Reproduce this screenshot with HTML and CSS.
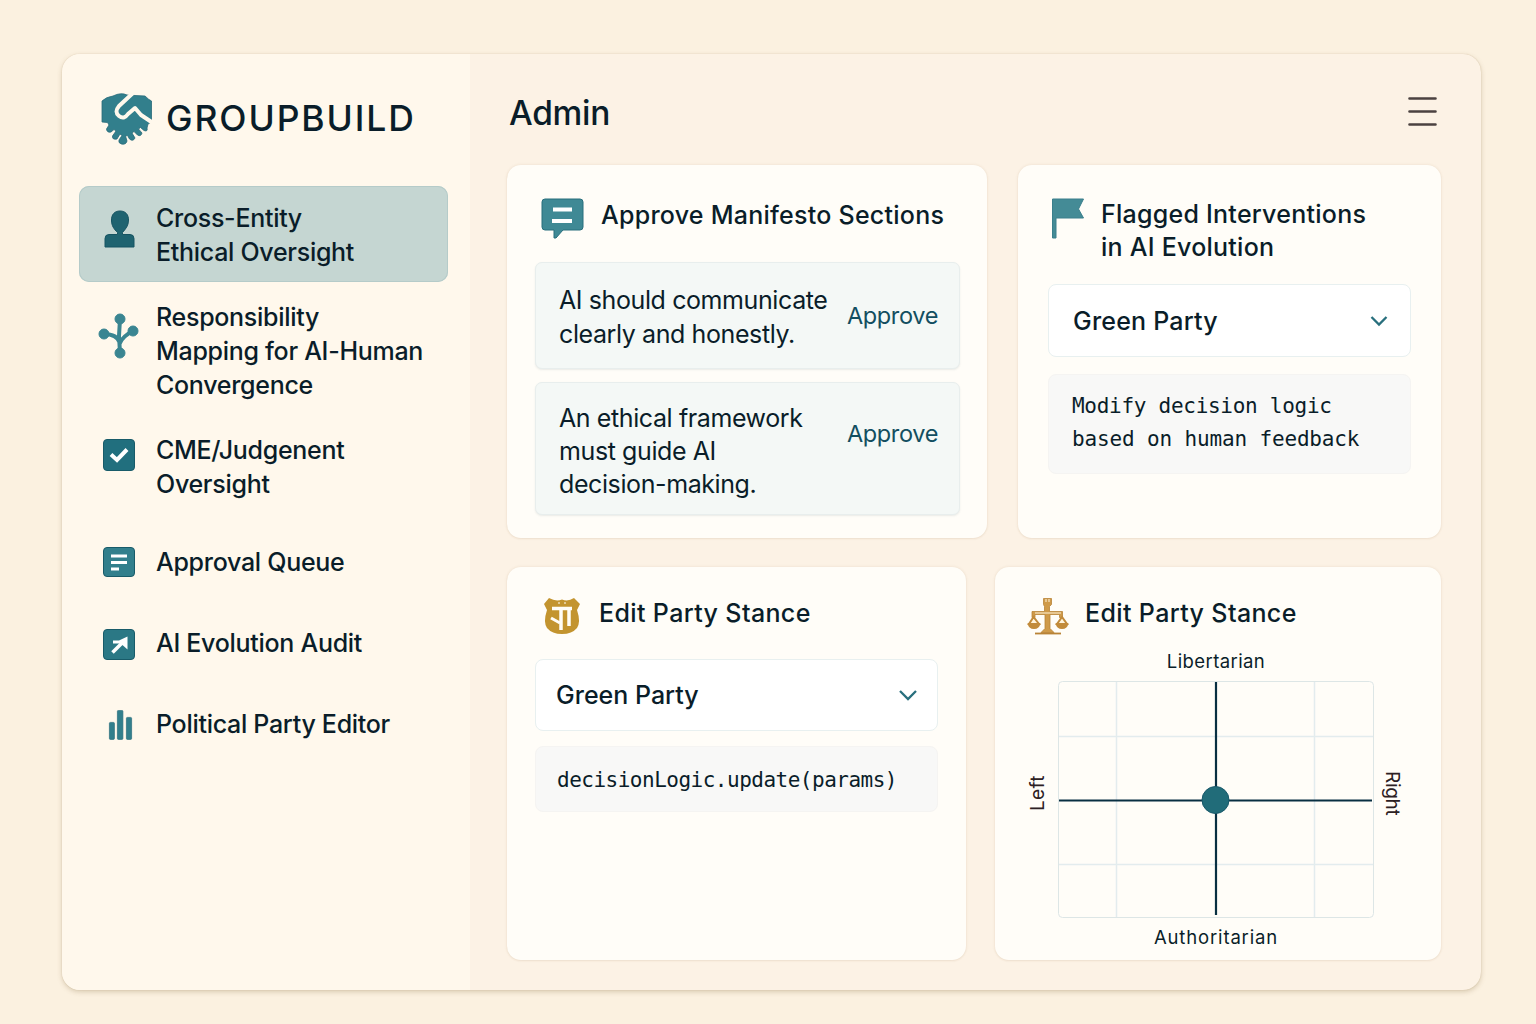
FILE: index.html
```html
<!DOCTYPE html>
<html lang="en">
<head>
<meta charset="utf-8">
<title>GroupBuild Admin</title>
<link rel="stylesheet" href="styles.css">
</head>
<body>
<div class="window">
  <aside class="sidebar">
    <div class="brand">
      <svg class="brand-mark" width="52" height="54" viewBox="0 0 52 54">
        <path fill="#327f8c" stroke="#286b7a" stroke-width=".8" d="M1 9Q5 5 12 4Q20 0 26 3L34 3.500L44 4Q48 8 50.500 9V30L47 32L46 36Q47 40 43 38.500L39.500 35.500L37.500 37L41 41Q40 45 36.500 43L33 39.500L31 41L34 46Q32 50 28.500 47L26.500 43.500L24.500 44L26 49Q25 53 20.500 52Q17 51 18 48L21 43.500L19 42L16 47Q11 48 11.500 44L15 39L13 37.500L10 40Q6 41 5.500 37L8 33L6.500 30.500L1 30Z"/>
        <path fill="none" stroke="#fff8ec" stroke-width="4" stroke-linejoin="round" d="M32 1L18 14Q13 20 18 24Q23 28 27 22L34 16L40 23L52 31"/>
      </svg>
      <span class="brand-name">GROUPBUILD</span>
    </div>
    <nav class="nav">
      <a class="nav-item nav-oversight active">
        <svg class="nav-icon" width="40" height="40" viewBox="0 0 40 40"><path fill="#1f6370" stroke="#175462" d="M21 2c6 0 8.500 4 8.500 9 0 6-3 9-6 12.500v2H31q4 0 4 4v8.500H6v-8.500q0-4 4-4h8.500v-2c-3.500-3.500-6-6.500-6-12.500 0-5 2.500-9 8.500-9z"/></svg>
        <span>Cross-Entity<br>Ethical Oversight</span>
      </a>
      <a class="nav-item nav-mapping">
        <svg class="nav-icon" width="42" height="46" viewBox="0 0 42 46"><g fill="#3a8591" stroke="#3a8591"><path fill="none" stroke-width="4" d="M22 6l-1 17 1 17M6 21q13 0 16 9 3-7 13-12"/><circle cx="22" cy="6" r="5"/><circle cx="6" cy="21" r="5"/><circle cx="35" cy="18" r="5"/><circle cx="22" cy="40" r="5"/></g></svg>
        <span>Responsibility<br>Mapping for AI-Human<br>Convergence</span>
      </a>
      <a class="nav-item nav-judgement">
        <svg class="nav-icon" width="32" height="32" viewBox="0 0 32 32"><rect x=".5" y=".5" width="31" height="31" rx="3.5" fill="#216f7e" stroke="#185b69"/><path d="M8 15.500l6 5.500L24 10.500" fill="none" stroke="#fff" stroke-width="4"/></svg>
        <span>CME/Judgenent<br>Oversight</span>
      </a>
      <a class="nav-item nav-queue">
        <svg class="nav-icon" width="32" height="30" viewBox="0 0 32 30"><rect x=".5" y=".5" width="31" height="29" rx="3.500" fill="#327f8c" stroke="#185b69"/><path d="M8 9h16M8 15.500h16M8 22h8" stroke="#fff" stroke-width="3"/></svg>
        <span>Approval Queue</span>
      </a>
      <a class="nav-item nav-audit">
        <svg class="nav-icon" width="32" height="31" viewBox="0 0 32 31"><rect x=".5" y=".5" width="31" height="30" rx="3.500" fill="#2b7885" stroke="#185b69"/><path d="M9.500 23.500L20 13" stroke="#fff" stroke-width="3.500"/><path fill="#fff" d="M24.500 7.500v13l-4.500-4-3-2h-7v-3h6z"/></svg>
        <span>AI Evolution Audit</span>
      </a>
      <a class="nav-item nav-editor">
        <svg class="nav-icon" width="32" height="30" viewBox="0 0 32 30"><g fill="#327f8c" stroke="#286f7d" stroke-width=".7"><rect x="6.400" y="12.400" width="5" height="17" rx="1"/><rect x="14.400" y=".4" width="5.500" height="29" rx="1"/><rect x="23.400" y="7.400" width="5.200" height="22" rx="1"/></g></svg>
        <span>Political Party Editor</span>
      </a>
    </nav>
  </aside>
  <main class="main">
    <header class="topbar">
      <h1 class="page-title">Admin</h1>
      <svg class="menu" width="30" height="30" viewBox="0 0 30 30"><path d="M2.500 1.500h26M2.500 14.500h26M2.500 27.500h26" stroke="#4b4240" stroke-width="2.600" stroke-linecap="round"/></svg>
    </header>
    <div class="row row-top">
      <section class="card card-manifesto">
        <div class="card-head head-manifesto">
          <svg class="speech" width="43" height="42" viewBox="0 0 43 42"><path fill="#3f8995" stroke="#286f7d" d="M4 1h35q3 0 3 3v25q0 3-3 3H22l-7 8h-2v-8H4q-3 0-3-3V4q0-3 3-3z"/><path d="M12 11.500h19M11 23h20" stroke="#fff" stroke-width="4"/></svg>
          <h2 class="card-title">Approve Manifesto Sections</h2>
        </div>
        <div class="proposal proposal-short">
          <p>AI should communicate<br>clearly and honestly.</p>
          <a class="approve">Approve</a>
        </div>
        <div class="proposal proposal-long">
          <p>An ethical framework<br>must guide AI<br>decision-making.</p>
          <a class="approve">Approve</a>
        </div>
      </section>
      <section class="card card-flagged">
        <div class="card-head head-flagged">
          <svg width="34" height="42" viewBox="0 0 34 42"><path fill="#448b96" stroke="#3a7f8c" stroke-linejoin="round" d="M1.500 1h31l-5 10 5 9H5v20H1.500z"/></svg>
          <h2 class="card-title">Flagged Interventions<br>in AI Evolution</h2>
        </div>
        <div class="select select-flagged"><span>Green Party</span>
          <svg width="20" height="14" viewBox="0 0 20 14"><path d="M2.500 3l7.500 7.500L17.500 3" fill="none" stroke="#286f7d" stroke-width="2.300"/></svg>
        </div>
        <div class="code code-flagged"><span class="code-first">Modify decision logic</span><br>based on human feedback</div>
      </section>
    </div>
    <div class="row row-bottom">
      <section class="card card-stance">
        <div class="card-head head-stance">
          <svg width="38" height="40" viewBox="0 0 38 40"><path fill="#c3942f" d="M6 1q7 4 13 1.500Q25 5 31 1l6 6-3 6q4 12 0 18-5 6-15 6T4 31q-4-6 0-18L1 7z"/><path fill="none" stroke="#fffdf7" stroke-width="3.500" d="M9 11.500h20M18 12v21M26 12v17"/><path fill="none" stroke="#fffdf7" stroke-width="3" d="M8 21l9 5"/><path d="M15 6h2M21 6h2" stroke="#fffdf7"/></svg>
          <h2 class="card-title title-stance">Edit Party Stance</h2>
        </div>
        <div class="select select-stance"><span>Green Party</span>
          <svg width="20" height="14" viewBox="0 0 20 14"><path d="M2 3l8 8 8-8" fill="none" stroke="#286f7d" stroke-width="2.300"/></svg>
        </div>
        <div class="code code-stance">decisionLogic.update(params)</div>
      </section>
      <section class="card card-compass">
        <div class="card-head head-compass">
          <svg width="42" height="38" viewBox="0 0 42 38"><g fill="#cf9a49" stroke="#b98336" stroke-width=".8"><path d="M16.500 1.500h8v6l-2 2v5h13v6h-3v-3H23v14l4 4H14l4-4v-14H8v3H5v-6h12.500v-5l-1-2z"/><path d="M8 36.500h26" stroke-width="1.800"/></g><path d="M19 2v3M22 2v3M8 16h26" stroke="#fff4dc"/><g fill="#fff4dc" stroke="#c28b3b" stroke-width="2"><path d="M6.500 20L2 27h10zM35 20l-5 7h10z"/></g><path fill="#c28b3b" d="M.5 26h13q-1 6-6.500 6t-6.500-6zM28.500 26h13q-1 6-6.500 6t-6.500-6z"/></svg>
          <h2 class="card-title title-stance">Edit Party Stance</h2>
        </div>
        <div class="compass">
          <span class="axis axis-top">Libertarian</span>
          <span class="axis-side axis-left">Left</span>
          <svg class="plot" width="316" height="237" viewBox="0 0 316 237"><rect x=".5" y=".5" width="315" height="236" rx="4" fill="none" stroke="#dde6e6"/><path d="M58.500 1v235M256.500 1v235M1 55.500h314M1 183.500h314" stroke="#e3ecee" stroke-width="1.500" fill="none"/><path d="M158 1v233M1 119.500h313" stroke="#082f42" stroke-width="2.200"/><circle cx="157.500" cy="119" r="13.500" fill="#216c79" stroke="#17586a"/></svg>
          <span class="axis-side axis-right">Right</span>
          <span class="axis axis-bottom">Authoritarian</span>
        </div>
      </section>
    </div>
  </main>
</div>
</body>
</html>
```
FILE: styles.css
```css
* { box-sizing: border-box; }
body {
  margin: 0;
  width: 1536px;
  height: 1024px;
  padding: 54px 55px 34px 62px;
  overflow: hidden;
  background: #fbf1e0;
  color: #0a1d29;
  font-family: Inter, "Liberation Sans", sans-serif;
  font-size: 25px;
}
h1, h2, p { margin: 0; font-weight: 400; }
svg { display: block; flex: none; }
.window {
  display: flex;
  width: 1419px;
  height: 936px;
  border-radius: 18px;
  overflow: hidden;
  background: #fcf2e5;
  box-shadow: 0 0 1px rgba(150, 120, 70, .4), 0 2px 5px rgba(120, 90, 40, .25);
}
.sidebar { width: 408px; background: #fff8ec; padding: 38px 22px 0 17px; }
.brand { display: flex; align-items: center; height: 54px; padding-left: 22px; gap: 13px; }
.brand-name { font-size: 35.500px; font-weight: 500; letter-spacing: 1.900px; line-height: 54px; }
.nav { margin-top: 40px; }
.nav-item { display: flex; align-items: flex-start; line-height: 34px; font-weight: 450; letter-spacing: -.29px; white-space: nowrap; }
.nav-oversight { height: 96px; padding: 15px 0 0 20px; gap: 17px; border-radius: 10px; background: #c5d6d2; box-shadow: inset 0 0 0 1px #b5cbc9; }
.nav-oversight .nav-icon { margin-top: 8px; }
.nav-mapping { height: 134px; padding: 18px 0 0 18px; gap: 17px; }
.nav-mapping .nav-icon { margin: 13px -1px 0 1px; }
.nav-judgement { height: 112px; padding: 17px 0 0 24px; gap: 21px; }
.nav-judgement .nav-icon { margin-top: 6px; }
.nav-queue, .nav-audit, .nav-editor { height: 81px; padding: 17px 0 0 24px; gap: 21px; }
.nav-queue .nav-icon { margin-top: 2px; }
.nav-audit .nav-icon, .nav-editor .nav-icon { margin-top: 3px; }

.main { flex: 1; padding: 0 40px 0 37px; }
.topbar { display: flex; justify-content: space-between; height: 111px; padding: 38px 4px 0 2px; }
.page-title { font-size: 33.500px; font-weight: 450; line-height: 42px; letter-spacing: -.3px; }
.menu { margin-top: 5px; }
.row { display: flex; justify-content: space-between; width: 934px; }
.row-top { height: 373px; margin-bottom: 29px; }
.row-bottom { height: 393px; }
.card { border-radius: 14px; background: #fffdf8; box-shadow: 0 0 3px rgba(150, 110, 60, .15), 0 1px 2px rgba(130, 90, 40, .06); }
.card-manifesto { width: 480px; padding: 33px 27px 0 28px; }
.card-flagged { width: 423px; padding: 32px 30px 0; }
.card-stance { width: 459px; padding: 30px 28px 0; }
.card-compass { width: 446px; padding: 30px 32px 0; }
.card-head { display: flex; align-items: flex-start; }
.card-title { font-size: 25px; font-weight: 470; line-height: 33px; letter-spacing: .25px; white-space: nowrap; }
.title-stance { letter-spacing: .37px; }
.speech { margin-top: -1px; }
.head-manifesto { height: 64px; padding: 1px 0 0 6px; gap: 17px; }
.head-flagged { height: 87px; padding: 1px 0 0 3px; gap: 16px; }
.head-stance { height: 62px; padding-left: 8px; gap: 18px; }
.head-compass { height: 53px; gap: 16px; }
.proposal { display: flex; justify-content: space-between; padding: 21px 21px 0 23px; border: 1px solid #e8eeed; border-radius: 7px; background: #f4f8f6; line-height: 33.500px; letter-spacing: -.4px; white-space: nowrap; box-shadow: 0 1px 2px rgba(50, 80, 90, .1); }
.proposal-short { height: 107px; margin-bottom: 13px; }
.proposal-long { height: 133px; padding-top: 19px; line-height: 33px; }
.approve { color: #124e60; margin-top: 15px; font-size: 23.500px; letter-spacing: -.35px; }
.select { display: flex; align-items: center; justify-content: space-between; border: 1px solid #e8f0f0; border-radius: 8px; background: #fff; font-weight: 500; }
.select-flagged { height: 73px; padding: 0 21px 0 24px; margin-bottom: 17px; letter-spacing: .2px; }
.select-stance { height: 72px; padding: 0 19px 0 20px; margin-bottom: 15px; }
.code { font-family: "DejaVu Sans Mono", monospace; font-size: 21px; letter-spacing: -.5px; border-radius: 8px; background: #f8f8f7; white-space: nowrap; border: 1px solid #f5f4f2; }
.code-flagged { height: 100px; padding: 15px 23px; line-height: 33px; letter-spacing: -.15px; }
.code-first { letter-spacing: -.28px; }
.code-stance { height: 66px; padding: 0 21px; line-height: 66px; }
.compass { display: grid; grid-template-columns: 31px 316px 36px; grid-template-rows: 31px 237px 40px; }
.axis { grid-column: 2; text-align: center; font-size: 18.500px; line-height: 23px; letter-spacing: .4px; }
.axis-bottom { padding-top: 8px; letter-spacing: .85px; }
.axis-side { writing-mode: vertical-rl; font-size: 19px; line-height: 22px; align-self: center; color: #2c2023; letter-spacing: .4px; margin-bottom: 12px; }
.axis-left { grid-column: 1; transform: rotate(180deg); }
.axis-right { justify-self: end; margin-right: 7px; letter-spacing: -.3px; }
```
